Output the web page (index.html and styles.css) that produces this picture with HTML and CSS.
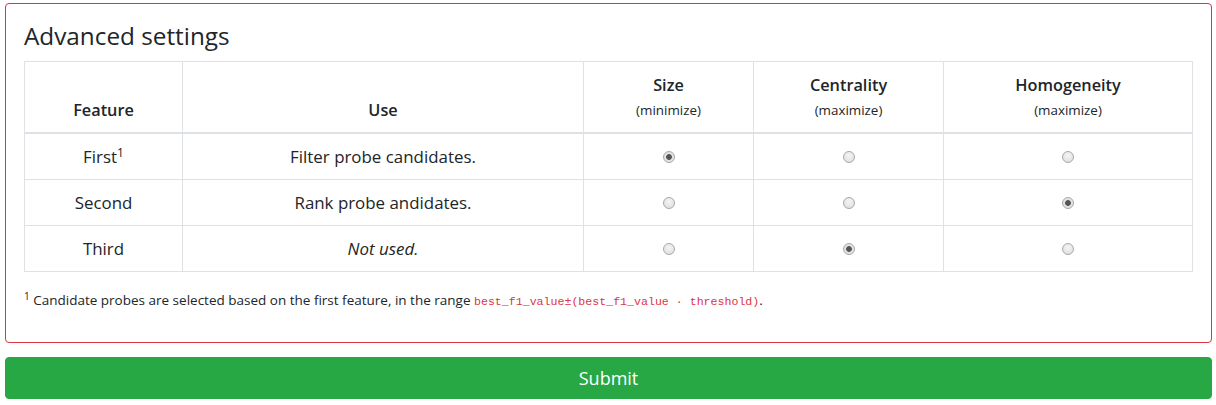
FILE: index.html
```html
<!DOCTYPE html>
<html>
<head>
<meta charset="utf-8">
<link rel="stylesheet" href="styles.css">
</head>
<body>
<div class="page">
  <form class="card">
    <h4 class="card-title">Advanced settings</h4>
    <table class="settings">
      <colgroup>
        <col class="c-feature">
        <col class="c-use">
        <col class="c-size">
        <col class="c-cent">
        <col class="c-homo">
      </colgroup>
      <thead>
        <tr>
          <th>Feature</th>
          <th>Use</th>
          <th>Size<br><small>(minimize)</small></th>
          <th>Centrality<br><small>(maximize)</small></th>
          <th>Homogeneity<br><small>(maximize)</small></th>
        </tr>
      </thead>
      <tbody>
        <tr>
          <td>First<sup>1</sup></td>
          <td>Filter probe candidates.</td>
          <td><input type="radio" name="size" checked></td>
          <td><input type="radio" name="centrality"></td>
          <td><input type="radio" name="homogeneity"></td>
        </tr>
        <tr>
          <td>Second</td>
          <td>Rank probe andidates.</td>
          <td><input type="radio" name="size2"></td>
          <td><input type="radio" name="centrality2"></td>
          <td><input type="radio" name="homogeneity2" checked></td>
        </tr>
        <tr>
          <td>Third</td>
          <td><em>Not used.</em></td>
          <td><input type="radio" name="size3"></td>
          <td><input type="radio" name="centrality3" checked></td>
          <td><input type="radio" name="homogeneity3"></td>
        </tr>
      </tbody>
    </table>
    <p class="footnote"><sup>1</sup> Candidate probes are selected based on the first feature, in the range <code>best_f1_value±(best_f1_value · threshold)</code>.</p>
  </form>
  <button class="submit" type="button">Submit</button>
</div>
</body>
</html>
```

FILE: styles.css
```css
html, body {
  margin: 0;
  padding: 0;
  background: #fff;
}
body {
  font-family: "Open Sans", "DejaVu Sans", sans-serif;
  font-size: 16px;
  line-height: 1.5;
  color: #212529;
}
.page {
  padding: 3px 4px 0 5px;
}
.card {
  display: block;
  border: 1px solid #dc3545;
  border-radius: 4px;
  padding: 17px 18px 18px;
  margin: 0 0 14px 0;
}
.card-title {
  margin: 0 0 11px 0;
  font-size: 24.3px;
  font-weight: 400;
  line-height: 1.2;
}
.settings {
  width: 100%;
  border-collapse: collapse;
  margin-bottom: 19px;
}
.c-feature { width: 158px; }
.c-use { width: 401px; }
.c-size { width: 170px; }
.c-cent { width: 190px; }
.c-homo { width: auto; }
.settings th, .settings td {
  border: 1px solid #dee2e6;
  padding: 10.5px 11px;
  text-align: center;
  vertical-align: top;
  line-height: 24px;
}
.settings td {
  font-size: 16.9px;
}
.settings thead th {
  vertical-align: bottom;
  border-bottom: 2px solid #dee2e6;
  font-weight: 600;
  font-size: 16.3px;
}
.settings th small {
  font-size: 13.4px;
  font-weight: 400;
}
.settings sup {
  font-size: 12px;
  line-height: 0;
  position: relative;
  top: -0.5em;
  vertical-align: baseline;
}
.settings input[type="radio"] {
  appearance: none;
  -webkit-appearance: none;
  width: 12px;
  height: 12px;
  margin: 6px 0 0 0;
  border: 1px solid #a9a9a9;
  border-radius: 50%;
  background: radial-gradient(circle at 50% 35%, #f4f4f4 0%, #dcdcdc 100%);
  vertical-align: top;
  box-sizing: border-box;
}
.settings input[type="radio"]:checked {
  background: radial-gradient(circle, #555 0, #555 2.5px, #e0e0e0 3.2px, #e8e8e8 100%);
}
.footnote {
  margin: 0 0 13px 0;
  font-size: 13.5px;
  line-height: 19px;
}
.footnote sup {
  font-size: 10px;
  line-height: 0;
  position: relative;
  top: -0.5em;
  vertical-align: baseline;
}
.footnote code {
  font-family: "Liberation Mono", "DejaVu Sans Mono", monospace;
  font-size: 11.6px;
  color: #dc3545;
}
.submit {
  display: block;
  width: 100%;
  height: 42px;
  border: 1px solid #28a745;
  border-radius: 4px;
  background: #28a745;
  color: #fff;
  font-family: "Open Sans", "DejaVu Sans", sans-serif;
  font-size: 18px;
  line-height: 1.5;
  padding: 0;
}
```
